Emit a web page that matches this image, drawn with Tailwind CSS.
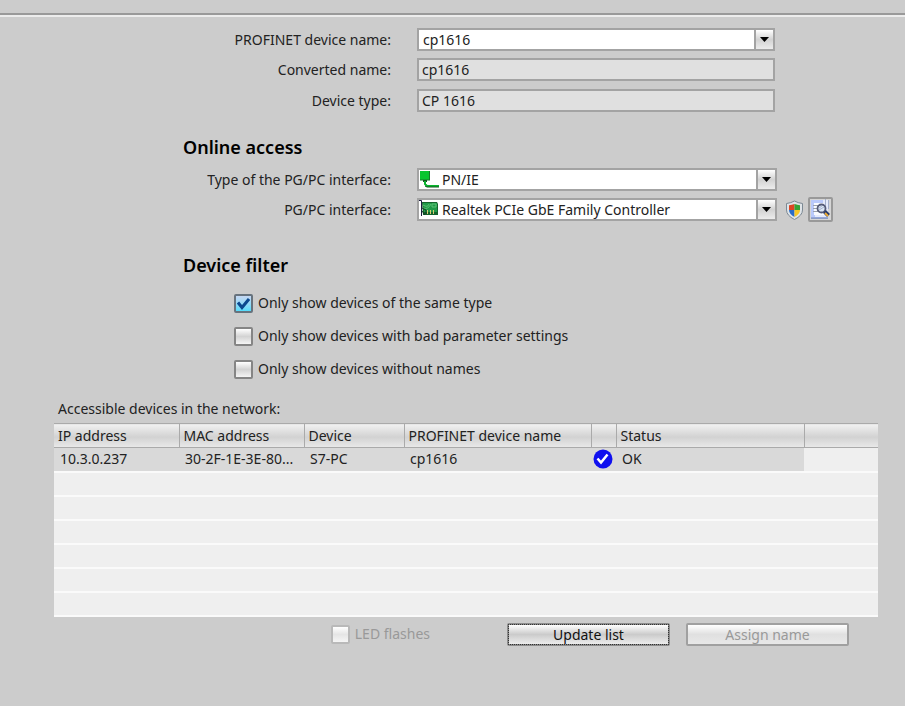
<!DOCTYPE html>
<html lang="en">
    <head>
        <title>Assign PROFINET device name</title>
        <meta charset="UTF-8" />
        <meta name="viewport" content="width=device-width, initial-scale=1.0">
        <script src="https://cdn.jsdelivr.net/npm/@tailwindcss/browser@4"></script>
    </head>

    <body class="min-h-screen bg-[#cccccc] font-['Noto_Sans','Open_Sans',sans-serif] text-[14px] leading-[22px] text-[#222]">
        <header class="h-[17px] border-b-2 border-[#ececec]">
            <div class="h-[15px] border-b-2 border-[#999]"></div>
        </header>
        <form class="pt-[11px]">
            <!-- Device -->
            <div class="flex items-center gap-[26px]">
                <label for="device-name" class="w-[391px] shrink-0 text-right">PROFINET device name:</label>
                <div class="relative w-full max-w-[358px]">
                    <select id="device-name" class="block h-[23px] w-full appearance-none border-2 border-[#a3a3a3] bg-white pl-1 leading-[19px]">
                        <option>cp1616</option>
                    </select>
                    <span class="pointer-events-none absolute inset-y-0 right-0 flex w-[21px] items-center justify-center border-2 border-[#a3a3a3] bg-linear-to-b from-white via-[#d2d2d2] to-[#ececec]">
                        <svg class="h-[5px] w-[9px]" viewBox="0 0 9 5"><path d="M0 0h9L4.500 5z" fill="#000"/></svg>
                    </span>
                </div>
            </div>
            <div class="mt-[7px] flex items-center gap-[26px]">
                <label for="converted-name" class="w-[391px] shrink-0 text-right">Converted name:</label>
                <input type="text" id="converted-name" value="cp1616" readonly class="h-[23px] w-full max-w-[358px] border-2 border-[#a3a3a3] bg-[#e0e0e0] pl-[3px] leading-[19px]">
            </div>
            <div class="mt-2 flex items-center gap-[26px]">
                <label for="device-type" class="w-[391px] shrink-0 text-right">Device type:</label>
                <input type="text" id="device-type" value="CP 1616" readonly class="h-[23px] w-full max-w-[358px] border-2 border-[#a3a3a3] bg-[#e0e0e0] pl-[3px] leading-[19px]">
            </div>

            <!-- Online access -->
            <h2 class="mt-[23px] pl-[183px] text-lg leading-6 font-semibold text-black">Online access</h2>
            <div class="mt-[9px] flex items-center gap-[26px]">
                <label for="interface-type" class="w-[391px] shrink-0 text-right">Type of the PG/PC interface:</label>
                <div class="relative w-full max-w-[360px]">
                    <select id="interface-type" class="block h-[23px] w-full appearance-none border-2 border-[#a3a3a3] bg-white pl-[23px] leading-[19px]">
                        <option>PN/IE</option>
                    </select>
                    <svg class="pointer-events-none absolute top-[3px] left-[3px] h-[17px] w-5" viewBox="0 0 20 17">
                        <path d="M0 0h10v9H0z" fill="#07c52f"/>
                        <path d="M0 9h10M9.500 0v9" stroke="#14752a" fill="none"/>
                        <path d="M3 9h4v2H3z" fill="#12561f"/>
                        <path d="M5 10v3l2 2h12" stroke="#08b52d" stroke-width="2" fill="none"/>
                        <path d="M5 15l2 1h12" stroke="#12561f" fill="none"/>
                    </svg>
                    <span class="pointer-events-none absolute inset-y-0 right-0 flex w-[21px] items-center justify-center border-2 border-[#a3a3a3] bg-linear-to-b from-white via-[#d2d2d2] to-[#ececec]">
                        <svg class="h-[5px] w-[9px]" viewBox="0 0 9 5"><path d="M0 0h9L4.500 5z" fill="#000"/></svg>
                    </span>
                </div>
            </div>
            <div class="mt-[7px] flex items-center">
                <label for="interface" class="mr-[26px] w-[391px] shrink-0 text-right">PG/PC interface:</label>
                <div class="relative w-full max-w-[360px]">
                    <select id="interface" class="block h-[23px] w-full appearance-none border-2 border-[#a3a3a3] bg-white pl-[23px] leading-[19px]">
                        <option>Realtek PCIe GbE Family Controller</option>
                    </select>
                    <svg class="pointer-events-none absolute top-[2px] left-[2px] h-[17px] w-5" viewBox="0 0 20 17">
                        <path d="M0 .5h2.500V16" stroke="#1d1d3f" fill="none"/>
                        <path d="M3 2h15l1 2v11H4z" fill="#15632c"/>
                        <path d="M4 3h14v9H5z" fill="#219a48"/>
                        <path d="M4 5q5 3 6-1M4 8q5 2 8-4M13 4h4v3h-4z" stroke="#5cc277" fill="none"/>
                        <path d="M3 8l4 2v4M3 11l3 4" stroke="#123d25" fill="none"/>
                        <path d="M8.500 10v4M11.500 10v4M14.500 10v4" stroke="#d8cf72"/>
                    </svg>
                    <span class="pointer-events-none absolute inset-y-0 right-0 flex w-[21px] items-center justify-center border-2 border-[#a3a3a3] bg-linear-to-b from-white via-[#d2d2d2] to-[#ececec]">
                        <svg class="h-[5px] w-[9px]" viewBox="0 0 9 5"><path d="M0 0h9L4.500 5z" fill="#000"/></svg>
                    </span>
                </div>
                <button type="button" aria-label="Administrator rights" class="-my-1 ml-2 shrink-0">
                    <svg class="h-5 w-[19px]" viewBox="0 0 19 20">
                        <path d="M9.500 1Q13 3 17.500 3.500V10q0 5.500-8 9.500-8-4-8-9.500V3.500Q6 3 9.500 1z" fill="#dfe4e8" stroke="#7c8994"/>
                        <path d="M9.500 4Q7 5 4 5.300V10h5.500z" fill="#dd4523"/>
                        <path d="M9.500 4q3 1 5.500 1.300V10H9.500z" fill="#35a335"/>
                        <path d="M4 10h5.500v7q-5.500-3-5.500-7z" fill="#286bc9"/>
                        <path d="M9.500 10H15q0 4-5.500 7z" fill="#f7c724"/>
                    </svg>
                </button>
                <button type="button" aria-label="Show details" class="-my-1 ml-1 flex h-[25px] w-[25px] shrink-0 items-center justify-center rounded-xs border-2 border-[#999] bg-[#d5d5d5]">
                    <svg class="h-[21px] w-[21px]" viewBox="0 0 21 21">
                        <path d="M1 1h17v18H1z" fill="#e5eafb"/>
                        <path d="M1 1h12v3H5v14H1z" fill="#b9c9fb"/>
                        <path d="M4 4h10v12H4z" fill="#f8faff"/>
                        <path d="M1 19h17" stroke="#4564b4"/>
                        <path d="M15.500 0v7M18.500 1v9" stroke="#a4b0cc"/>
                        <path d="M3 6.500h5M3 9.500h4M3 12.500h5" stroke="#9aa0aa"/>
                        <circle cx="11.500" cy="9.500" r="4" fill="#dbe7f5" stroke="#555b78" stroke-width="1.800"/>
                        <path d="M9 11l5-3M9 9l3-2" stroke="#a9b5d0"/>
                        <path d="M14.500 12.500l4 4" stroke="#273a69" stroke-width="4"/>
                        <path d="M15 14l3 3" stroke="#ecaa31" stroke-width="2"/>
                    </svg>
                </button>
            </div>

            <!-- Device filter -->
            <h2 class="mt-8 pl-[183px] text-lg leading-6 font-semibold text-black">Device filter</h2>
            <div class="mt-[15px] flex flex-col gap-[11px] pl-[234px]">
                <div class="flex items-center gap-[5px]">
                    <span class="relative">
                        <input type="checkbox" id="same-type" checked class="block h-[19px] w-[19px] appearance-none rounded-xs border-2 border-[#67737e] bg-linear-to-b from-[#c5d7f3] to-[#52dcfb]">
                        <svg class="pointer-events-none absolute top-[3px] left-[3px] h-[13px] w-[13px]" viewBox="0 0 13 13"><path d="M1 5.500l4 5L12 2" stroke="#0c488f" stroke-width="3" fill="none"/></svg>
                    </span>
                    <label for="same-type">Only show devices of the same type</label>
                </div>
                <div class="flex items-center gap-[5px]">
                    <input type="checkbox" id="bad-params" class="h-[19px] w-[19px] appearance-none rounded-xs border-2 border-[#858585] bg-linear-to-b from-white via-[#d3d3d3] to-[#f5f5f5]">
                    <label for="bad-params">Only show devices with bad parameter settings</label>
                </div>
                <div class="flex items-center gap-[5px]">
                    <input type="checkbox" id="no-names" class="h-[19px] w-[19px] appearance-none rounded-xs border-2 border-[#858585] bg-linear-to-b from-white via-[#d3d3d3] to-[#f5f5f5]">
                    <label for="no-names">Only show devices without names</label>
                </div>
            </div>

            <!-- Accessible devices -->
            <div class="mt-[18px] mr-[27px] ml-[54px]">
                <table class="w-full table-fixed border-collapse text-left">
                    <caption class="h-[25px] pl-1 text-left">Accessible devices in the network:</caption>
                    <colgroup>
                        <col class="w-[125px]"><col class="w-[125px]"><col class="w-[100px]"><col class="w-[187px]"><col class="w-[25px]"><col class="w-[188px]"><col>
                    </colgroup>
                    <thead class="leading-[22px]">
                        <tr class="h-6 border-y border-[#aaa] bg-linear-to-b from-[#f0f0f0] via-[#d2d2d2] via-55% to-[#e8e8e8]">
                            <th class="border-r border-[#aaa] pl-1 font-normal">IP address</th>
                            <th class="border-r border-[#aaa] pl-1 font-normal">MAC address</th>
                            <th class="border-r border-[#aaa] pl-1 font-normal">Device</th>
                            <th class="border-r border-[#aaa] pl-1 font-normal">PROFINET device name</th>
                            <th class="border-r border-[#aaa]"></th>
                            <th class="border-r border-[#aaa] pl-1 font-normal">Status</th>
                            <th></th>
                        </tr>
                    </thead>
                    <tbody class="bg-[#efefef]">
                        <tr class="h-6 border-b-2 border-[#fafafa]">
                            <td class="bg-[#d9d9d9] pl-1.5">10.3.0.237</td>
                            <td class="truncate bg-[#d9d9d9] pl-1.5">30-2F-1E-3E-80...</td>
                            <td class="bg-[#d9d9d9] pl-1.5">S7-PC</td>
                            <td class="bg-[#d9d9d9] pl-1.5">cp1616</td>
                            <td class="bg-[#d9d9d9]">
                                <svg class="ml-0.5 h-5 w-5" viewBox="0 0 20 20"><circle cx="10" cy="10" r="9.500" fill="#1010ef"/><path d="M4.500 9.500l3.500 4 6.500-8" stroke="#fff" stroke-width="2.500" fill="none"/></svg>
                            </td>
                            <td class="bg-[#d9d9d9] pl-1.5">OK</td>
                            <td></td>
                        </tr>
                        <tr class="h-6 border-b-2 border-[#fafafa]"><td colspan="7"></td></tr>
                        <tr class="h-6 border-b-2 border-[#fafafa]"><td colspan="7"></td></tr>
                        <tr class="h-6 border-b-2 border-[#fafafa]"><td colspan="7"></td></tr>
                        <tr class="h-6 border-b-2 border-[#fafafa]"><td colspan="7"></td></tr>
                        <tr class="h-6 border-b-2 border-[#fafafa]"><td colspan="7"></td></tr>
                        <tr class="h-6 border-b-2 border-[#fafafa]"><td colspan="7"></td></tr>
                    </tbody>
                </table>
            </div>

            <div class="mt-1.5 mr-[56px] flex items-center justify-end">
                <div class="mr-[77px] flex items-center gap-[5px] text-[#999]">
                    <input type="checkbox" id="led-flashes" disabled class="h-[19px] w-[19px] appearance-none rounded-xs border-2 border-[#b9b9b9] bg-linear-to-b from-white via-[#e5e5e5] to-[#f5f5f5]">
                    <label for="led-flashes">LED flashes</label>
                </div>
                <button type="button" class="mr-4 h-[23px] w-[163px] rounded-xs border-2 border-[#8c8c8c] bg-linear-to-b from-white via-[#cbcbcb] to-[#ededed] leading-[19px] text-[#111] outline-1 -outline-offset-2 outline-dotted outline-[#333]">Update list</button>
                <button type="button" disabled class="h-[23px] w-[163px] rounded-xs border-2 border-[#a0a0a0] bg-linear-to-b from-white via-[#e0e0e0] to-[#e8e8e8] leading-[19px] text-[#999]">Assign name</button>
            </div>
        </form>
    </body>
</html>
